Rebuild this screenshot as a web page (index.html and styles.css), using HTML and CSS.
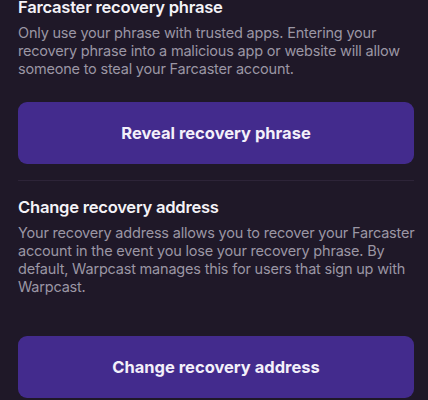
FILE: index.html
```html
<!DOCTYPE html>
<html>
<head>
<meta charset="utf-8">
<link rel="stylesheet" href="styles.css">
</head>
<body>
<main class="page">
  <section class="section first">
    <h2 class="title">Farcaster recovery phrase</h2>
    <p class="desc">Only use your phrase with trusted apps. Entering your recovery phrase into a malicious app or website will allow someone to steal your Farcaster account.</p>
    <button class="btn btn-reveal">Reveal recovery phrase</button>
  </section>
  <hr class="divider">
  <section class="section">
    <h2 class="title">Change recovery address</h2>
    <p class="desc">Your recovery address allows you to recover your Farcaster account in the event you lose your recovery phrase. By default, Warpcast manages this for users that sign up with Warpcast.</p>
    <button class="btn btn-change">Change recovery address</button>
  </section>
</main>
</body>
</html>
```
FILE: styles.css
```css
html, body {
  margin: 0;
  padding: 0;
  background: #1f1828;
  overflow: hidden;
}
body {
  font-family: Inter, "Noto Sans", sans-serif;
  -webkit-font-smoothing: antialiased;
}
.page {
  padding: 0 14px 0 18px;
  margin-top: -4px;
}
.section {
  display: flex;
  flex-direction: column;
}
.title {
  margin: 0;
  font-size: 16.6px;
  line-height: 22px;
  font-weight: 600;
  color: #f4f2f7;
  letter-spacing: -0.25px;
}
.desc {
  margin: 6px 0 0;
  font-size: 14.5px;
  line-height: 18px;
  color: #9b96a4;
  letter-spacing: -0.2px;
  margin-right: -6px;
}
.btn {
  border: none;
  border-radius: 9px;
  background: #432b8d;
  color: #f3f0fa;
  font-family: inherit;
  font-size: 16.5px;
  font-weight: 700;
  height: 62px;
  width: 100%;
  padding: 0;
}
.btn-reveal {
  margin-top: 24px;
}
.btn-change {
  margin-top: 40px;
}
.divider {
  border: none;
  height: 1px;
  background: #2d2438;
  margin: 16px 0 15px;
}
```
